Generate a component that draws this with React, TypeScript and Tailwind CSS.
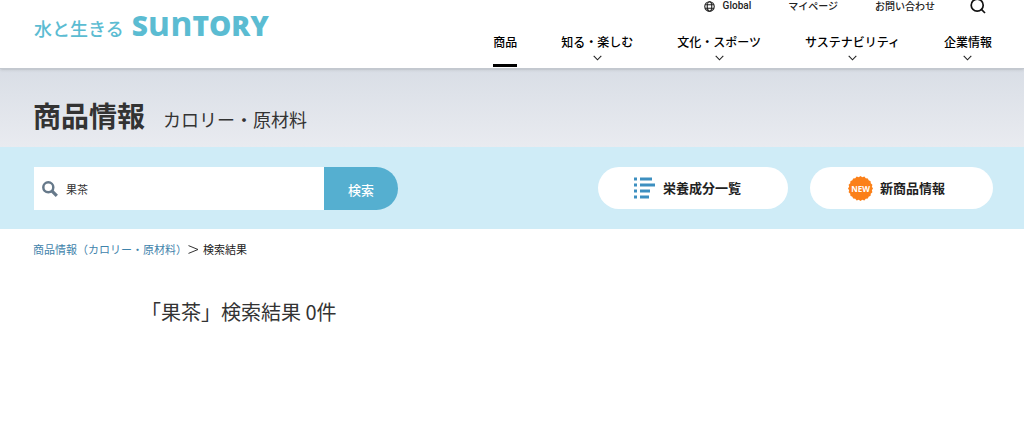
import React from 'react';

const navItems = [
  { label: '商品', active: true },
  { label: '知る・楽しむ', active: false },
  { label: '文化・スポーツ', active: false },
  { label: 'サステナビリティ', active: false },
  { label: '企業情報', active: false },
];

function GlobeIcon() {
  return (
    <svg className="w-[11px] h-[11px]" viewBox="0 0 22 22" fill="none" stroke="#222" strokeWidth="2.2">
      <circle cx="11" cy="11" r="9.5" />
      <ellipse cx="11" cy="11" rx="4.5" ry="9.5" />
      <path d="M2.5 7.5h17M2.5 14.5h17" />
    </svg>
  );
}

function SearchIcon() {
  return (
    <svg className="w-4 h-4" viewBox="0 0 16 16" fill="none" stroke="#111" strokeWidth="1.7">
      <circle cx="7.2" cy="7.2" r="6" />
      <path d="M11.4 11.4l3.6 3.6" />
    </svg>
  );
}

function BoldSearchIcon() {
  return (
    <svg className="w-4 h-4 shrink-0" viewBox="0 0 16 16" fill="none" stroke="#66798a">
      <circle cx="6.3" cy="6.3" r="5" strokeWidth="2.5" />
      <path d="M9.8 9.8l5 5" strokeWidth="3.2" />
    </svg>
  );
}

function ListIcon() {
  return (
    <svg className="w-[21px] h-[22px]" viewBox="0 0 21 22" fill="#3d8fc0">
      <path d="M0 0.5h3v3h-3zM6 0.5h12v3h-12zM0 6.5h3v3h-3zM6 6.5h15v3h-15zM0 12.5h3v3h-3zM6 12.5h10v3h-10zM0 18.5h3v3h-3zM6 18.5h9v3h-9z" />
    </svg>
  );
}

function NewIcon() {
  // scalloped badge, 20 teeth
  const points = Array.from({ length: 40 }, (_, i) => {
    const r = i % 2 === 0 ? 12.5 : 11.5;
    const a = (i * Math.PI) / 20;
    return `${12.5 + r * Math.cos(a)},${12.5 + r * Math.sin(a)}`;
  }).join(' ');
  return (
    <svg className="w-[25px] h-[25px]" viewBox="0 0 25 25">
      <polygon points={points} fill="#fb8019" />
      <text x="12.5" y="15.5" textAnchor="middle" fontSize="8" fontWeight="700" fill="#fff" fontFamily="Open Sans, sans-serif">
        NEW
      </text>
    </svg>
  );
}

function Header() {
  return (
    <header className="relative flex justify-between h-[69px] pl-[34px] pr-8 bg-white border-b border-[#c3c8cf] shadow-sm">
      <a href="#" className="flex items-baseline h-10 pt-[7px] text-[#5bbcd2] leading-8">
        <span className="text-[18px] font-medium">水と生きる</span>
        <span className="ml-2 font-['Open_Sans',sans-serif] text-[28px] font-extrabold">
          S<span className="text-[34px] font-bold">un</span>TORY
        </span>
      </a>
      <div className="flex flex-col items-end">
        <div className="flex items-center h-3 mr-[6px] text-[10px] leading-3 font-medium">
          <a href="#" className="flex items-center gap-2 font-['Roboto',sans-serif]">
            <GlobeIcon />
            Global
          </a>
          <a href="#" className="ml-[37px]">マイページ</a>
          <a href="#" className="ml-[37px]">お問い合わせ</a>
          <button type="button" aria-label="検索" className="ml-[35px]">
            <SearchIcon />
          </button>
        </div>
        <nav className="flex gap-11 mt-5 text-xs leading-5 font-medium text-black">
          {navItems.map((item) => (
            <a key={item.label} href="#" className="flex flex-col items-center">
              {item.label}
              {item.active ? (
                <span className="w-full h-[3px] mt-3 bg-black" />
              ) : (
                <svg className="w-[9px] h-[6px] mt-[3px]" viewBox="0 0 9 6" fill="none" stroke="#222" strokeWidth="1.1">
                  <path d="M0.7 0.8l3.8 4 3.8-4" />
                </svg>
              )}
            </a>
          ))}
        </nav>
      </div>
    </header>
  );
}

export default function App() {
  return (
    <div className="bg-white text-[#222] font-['Noto_Sans_CJK_JP',sans-serif]">
      <Header />
      <main>
        <div className="flex items-baseline gap-[18px] h-[78px] pl-[33px] pt-[26px] bg-linear-to-b from-[#d9dee6] to-[#e9ebf0] text-[#333]">
          <h1 className="text-[28px] leading-10 font-bold">商品情報</h1>
          <p className="text-lg">カロリー・原材料</p>
        </div>

        <div className="flex items-start justify-between h-[82px] pl-[34px] pr-[31px] pt-5 bg-[#cfecf7]">
          <form className="flex h-[43px]">
            <label className="flex items-center gap-2 w-[290px] pl-2 bg-white">
              <BoldSearchIcon />
              <input
                type="text"
                aria-label="商品を検索"
                defaultValue="果茶"
                className="flex-1 min-w-0 pt-0.5 text-[11px] text-[#333] outline-none"
              />
            </label>
            <button type="button" className="w-[74px] pt-0.5 rounded-r-full bg-[#55afd0] text-white text-[13px] font-medium">
              検索
            </button>
          </form>
          <div className="flex gap-[22px] text-[13px] font-bold">
            <a href="#" className="flex items-center gap-2 w-[190px] h-[42px] pl-9 rounded-full bg-white">
              <ListIcon />
              栄養成分一覧
            </a>
            <a href="#" className="flex items-center gap-[7px] w-[183px] h-[42px] pl-[38px] rounded-full bg-white">
              <NewIcon />
              新商品情報
            </a>
          </div>
        </div>

        <nav aria-label="パンくず" className="flex items-center pl-[33px] pt-[10px] text-[11px] leading-5">
          <a href="#" className="text-[#3f83ab]">商品情報（カロリー・原材料）</a>
          <svg className="w-[11px] h-[9px] ml-px mr-1" viewBox="0 0 11 9" fill="none" stroke="#333">
            <path d="M0.5 0.6l9.5 3.9-9.5 3.9" />
          </svg>
          <span>検索結果</span>
        </nav>

        <h2 className="px-[141px] pt-[37px] text-xl leading-8 text-[#333]">「果茶」検索結果 0件</h2>
      </main>
    </div>
  );
}
